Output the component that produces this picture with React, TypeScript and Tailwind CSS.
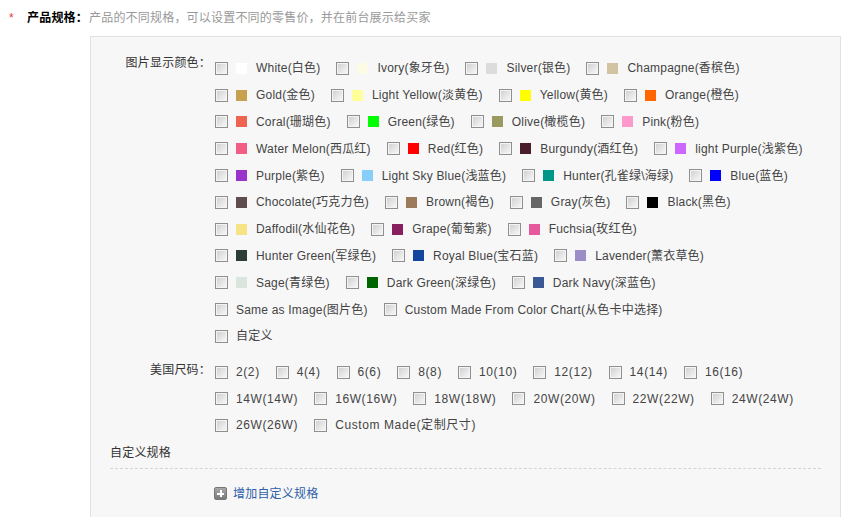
import React from "react";

type Color = { name: string; color: string };

const colorRows: Color[][] = [
  [
    { name: "White(白色)", color: "#ffffff" },
    { name: "Ivory(象牙色)", color: "#fbfbe6" },
    { name: "Silver(银色)", color: "#dcdcdc" },
    { name: "Champagne(香槟色)", color: "#d3c4a1" },
  ],
  [
    { name: "Gold(金色)", color: "#c9a050" },
    { name: "Light Yellow(淡黄色)", color: "#ffff99" },
    { name: "Yellow(黄色)", color: "#ffff00" },
    { name: "Orange(橙色)", color: "#ff6600" },
  ],
  [
    { name: "Coral(珊瑚色)", color: "#ef6450" },
    { name: "Green(绿色)", color: "#00ff00" },
    { name: "Olive(橄榄色)", color: "#9a9a60" },
    { name: "Pink(粉色)", color: "#ff99cc" },
  ],
  [
    { name: "Water Melon(西瓜红)", color: "#f25d86" },
    { name: "Red(红色)", color: "#ff0000" },
    { name: "Burgundy(酒红色)", color: "#4a1d2c" },
    { name: "light Purple(浅紫色)", color: "#cc66ff" },
  ],
  [
    { name: "Purple(紫色)", color: "#9933cc" },
    { name: "Light Sky Blue(浅蓝色)", color: "#87cefa" },
    { name: "Hunter(孔雀绿\\海绿)", color: "#00968a" },
    { name: "Blue(蓝色)", color: "#0000ff" },
  ],
  [
    { name: "Chocolate(巧克力色)", color: "#5f4c4c" },
    { name: "Brown(褐色)", color: "#9b7b5b" },
    { name: "Gray(灰色)", color: "#666666" },
    { name: "Black(黑色)", color: "#000000" },
  ],
  [
    { name: "Daffodil(水仙花色)", color: "#f5e385" },
    { name: "Grape(葡萄紫)", color: "#882060" },
    { name: "Fuchsia(玫红色)", color: "#e65a9d" },
  ],
  [
    { name: "Hunter Green(军绿色)", color: "#2b3d34" },
    { name: "Royal Blue(宝石蓝)", color: "#13479d" },
    { name: "Lavender(薰衣草色)", color: "#9b8dc7" },
  ],
  [
    { name: "Sage(青绿色)", color: "#d9e5dd" },
    { name: "Dark Green(深绿色)", color: "#006400" },
    { name: "Dark Navy(深蓝色)", color: "#3a5896" },
  ],
];

const plainRows: string[][] = [
  ["Same as Image(图片色)", "Custom Made From Color Chart(从色卡中选择)"],
  ["自定义"],
];

const sizeRows: string[][] = [
  ["2(2)", "4(4)", "6(6)", "8(8)", "10(10)", "12(12)", "14(14)", "16(16)"],
  ["14W(14W)", "16W(16W)", "18W(18W)", "20W(20W)", "22W(22W)", "24W(24W)"],
  ["26W(26W)", "Custom Made(定制尺寸)"],
];

const Checkbox = () => (
  <span className="inline-flex w-[13px] h-[13px] shrink-0 border border-[#8f8f8f] bg-[#f4f4f4] p-[1px]">
    <span className="block w-full h-full bg-linear-to-br from-[#d2d2d2] to-[#f6f6f6]" />
  </span>
);

const ColorItem = ({ item }: { item: Color }) => (
  <label className="flex items-center mr-[16px] cursor-pointer">
    <Checkbox />
    <span className="ml-[8px] w-[11px] h-[11px]" style={{ backgroundColor: item.color }} />
    <span className="ml-[9px] whitespace-nowrap">{item.name}</span>
  </label>
);

const PlainItem = ({ name }: { name: string }) => (
  <label className="flex items-center mr-[16px] cursor-pointer">
    <Checkbox />
    <span className="ml-[8px] whitespace-nowrap">{name}</span>
  </label>
);

const App = () => {
  return (
    <div className="w-[843px] h-[517px] overflow-hidden bg-white text-[12px] tracking-[0.2px] text-[#444] font-['Liberation_Sans','Noto_Sans_CJK_SC',sans-serif]">
      {/* header */}
      <div className="flex items-center h-[36px] pl-[9px]">
        <span className="text-[#e4393c] w-[18px]">*</span>
        <span className="font-bold text-black">产品规格：</span>
        <span className="ml-[1px] text-[#999]">产品的不同规格，可以设置不同的零售价，并在前台展示给买家</span>
      </div>

      <div className="ml-[90px] mr-[2px] h-[600px] border border-[#e2e2e2] bg-[#f7f7f7] pt-[18px]">
        {/* colors */}
        <div className="flex">
          <div className="w-[120px] text-right text-[#333] leading-[20px] -mt-[2px]">图片显示颜色：</div>
          <div className="ml-[4px] flex flex-col">
            {colorRows.map((row, i) => (
              <div key={i} className="flex items-center h-[26.8px]">
                {row.map((c) => (
                  <ColorItem key={c.name} item={c} />
                ))}
              </div>
            ))}
            {plainRows.map((row, i) => (
              <div key={i} className="flex items-center h-[26.8px]">
                {row.map((n) => (
                  <PlainItem key={n} name={n} />
                ))}
              </div>
            ))}
          </div>
        </div>

        {/* sizes */}
        <div className="flex mt-[9px]">
          <div className="w-[120px] text-right text-[#333] leading-[20px] pt-[1px]">美国尺码：</div>
          <div className="ml-[4px] flex flex-col tracking-[0.6px]">
            {sizeRows.map((row, i) => (
              <div key={i} className="flex items-center h-[26.6px]">
                {row.map((n) => (
                  <PlainItem key={n} name={n} />
                ))}
              </div>
            ))}
          </div>
        </div>

        {/* custom spec */}
        <div className="mx-[19px] mt-[2px]">
          <div className="text-[#333] h-[24px] leading-[24px]">自定义规格</div>
          <div className="border-t border-dashed border-[#d4d4d4] mt-[3px]" />
          <div className="flex items-center ml-[104px] mt-[16px]">
            <span className="relative w-[13px] h-[13px] rounded-[2px] bg-linear-to-b from-[#a8a8a8] to-[#7a7a7a] border border-[#777]">
              <span className="absolute left-[2px] top-[4.5px] w-[7px] h-[2px] bg-white" />
              <span className="absolute left-[4.5px] top-[2px] w-[2px] h-[7px] bg-white" />
            </span>
            <a href="#" className="ml-[6px] text-[#2f5fa8] text-[12px]">
              增加自定义规格
            </a>
          </div>
        </div>
      </div>
    </div>
  );
};

export default App;
